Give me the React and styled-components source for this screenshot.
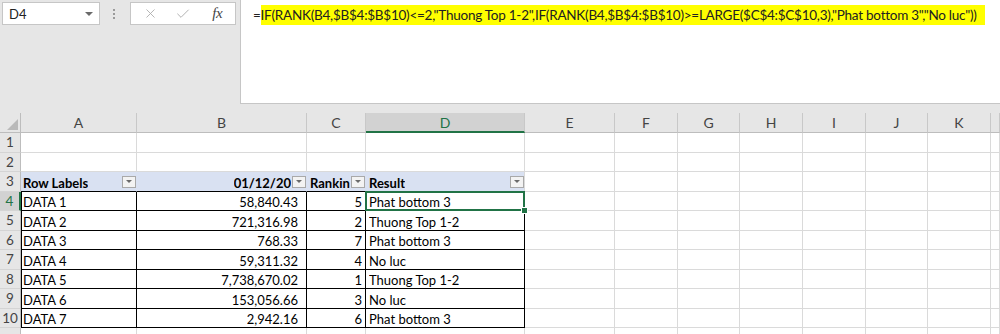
import React from 'react';
import styled, { createGlobalStyle } from 'styled-components';
import { X, Check } from 'lucide-react';

const GlobalStyle = createGlobalStyle`
  html, body {
    margin: 0;
    padding: 0;
    background: #fff;
  }
  body {
    font-family: Lato, "Liberation Sans", sans-serif;
  }
`;

const GREEN = '#217346';
const GRID = '#dadada';

const Page = styled.div`
  width: 1000px;
  height: 334px;
  overflow: hidden;
  display: flex;
  flex-direction: column;
  background: #e6e6e6;
`;

/* ---------- formula bar ---------- */

const Toolbar = styled.div`
  display: flex;
  height: 104px;
  flex-shrink: 0;
`;

const LeftTools = styled.div`
  width: 240px;
  flex-shrink: 0;
  display: flex;
  align-items: flex-start;
  padding: 2px 0 0 2px;
  box-sizing: border-box;
`;

const NameBox = styled.div`
  width: 98px;
  height: 23px;
  box-sizing: border-box;
  background: #fff;
  border: 1px solid #c6c6c6;
  display: flex;
  align-items: center;
  justify-content: space-between;
  padding: 0 6px 0 6px;
  font-size: 13px;
  color: #222;
`;

const Caret = styled.span`
  width: 0;
  height: 0;
  border-left: 4px solid transparent;
  border-right: 4px solid transparent;
  border-top: 4px solid #6a6a6a;
`;

const Grip = styled.div`
  width: 2px;
  height: 23px;
  margin: 0 15px 0 13px;
  display: flex;
  flex-direction: column;
  justify-content: center;
  gap: 2px;

  span {
    width: 2px;
    height: 2px;
    background: #9a9a9a;
  }
`;

const FxBox = styled.div`
  width: 106px;
  height: 23px;
  box-sizing: border-box;
  background: #fff;
  border: 1px solid #c6c6c6;
  display: flex;
  align-items: center;
  padding-left: 3px;
`;

const ToolSlot = styled.span`
  width: ${p => p.$w || 33}px;
  display: flex;
  justify-content: center;
  align-items: center;
  color: #ababab;
`;

const FxLabel = styled.span`
  font-family: "Liberation Serif", serif;
  font-style: italic;
  font-size: 15px;
  color: #444;
  letter-spacing: -0.5px;
`;

const FormulaBox = styled.div`
  flex: 1;
  background: #fff;
  border-left: 1px solid #c6c6c6;
  border-bottom: 1px solid #c6c6c6;
  padding: 4px 0 0 12px;
  font-size: 13.5px;
  letter-spacing: -0.25px;
  color: #222;
  white-space: nowrap;
  overflow: hidden;
  line-height: 22px;
`;

const Mark = styled.span`
  background: #ffff00;
  padding: 2px 8px 2px 0;
`;

/* ---------- sheet grid ---------- */

const Sheet = styled.div`
  margin-top: 9px;
  display: grid;
  grid-template-columns: 21px 116px 170px 59px 159px 90px 63px 62px 63px 63px 62px 63px 9px;
  grid-template-rows: 20px repeat(11, 19.5px);
`;

const Corner = styled.div`
  position: relative;
  background: #e6e6e6;
  border-right: 1px solid #bdbdbd;
  border-bottom: 1px solid #bdbdbd;
  box-sizing: border-box;

  &::after {
    content: '';
    position: absolute;
    right: 2px;
    bottom: 2px;
    width: 11px;
    height: 11px;
    background: #b9b9b9;
    clip-path: polygon(100% 0, 100% 100%, 0 100%);
  }
`;

const ColHead = styled.div`
  box-sizing: border-box;
  display: flex;
  align-items: center;
  justify-content: center;
  background: ${p => (p.$active ? '#d2d2d2' : '#e6e6e6')};
  color: ${p => (p.$active ? GREEN : '#444')};
  border-right: 1px solid #c8c8c8;
  border-bottom: ${p => (p.$active ? `2px solid ${GREEN}` : '1px solid #bdbdbd')};
  font-size: 14px;
`;

const RowHead = styled.div`
  box-sizing: border-box;
  display: flex;
  align-items: center;
  justify-content: center;
  background: ${p => (p.$active ? '#d2d2d2' : '#e6e6e6')};
  color: ${p => (p.$active ? GREEN : '#444')};
  border-right: ${p => (p.$active ? `2px solid ${GREEN}` : '1px solid #bdbdbd')};
  border-bottom: 1px solid #d4d4d4;
  font-size: 13.5px;
`;

const Cell = styled.div`
  position: relative;
  box-sizing: border-box;
  display: flex;
  align-items: flex-end;
  justify-content: ${p => (p.$align === 'right' ? 'flex-end' : 'flex-start')};
  padding: ${p => p.$pad || '0 2px'};
  background: ${p => p.$fill || '#fff'};
  border-right: 1px solid ${p => p.$lineR || GRID};
  border-bottom: 1px solid ${p => p.$lineB || GRID};
  box-shadow: ${p => (p.$leftEdge ? 'inset 1px 0 0 #000' : 'none')};
  font-size: 13px;
  font-weight: ${p => (p.$bold ? 700 : 400)};
  color: #000;
  line-height: 16px;
  white-space: nowrap;
  min-width: 0;
`;

const CellText = styled.span`
  overflow: hidden;
  min-width: 0;
`;

const FilterBtn = styled.span`
  flex-shrink: 0;
  width: 14px;
  height: 12px;
  box-sizing: border-box;
  margin: 0 0 3px auto;
  background: #f3f3f3;
  border: 1px solid #a9a9a9;
  display: flex;
  align-items: center;
  justify-content: center;

  &::after {
    content: '';
    border-left: 3px solid transparent;
    border-right: 3px solid transparent;
    border-top: 3px solid #6a6a6a;
  }
`;

const Selection = styled.span`
  position: absolute;
  top: -1px;
  left: -1px;
  right: -1px;
  bottom: -1px;
  border: 2px solid ${GREEN};
  pointer-events: none;
  z-index: 2;

  &::after {
    content: '';
    position: absolute;
    right: -5px;
    bottom: -5px;
    width: 5px;
    height: 5px;
    background: ${GREEN};
    border: 1px solid #fff;
  }
`;

const COLS = ['A', 'B', 'C', 'D', 'E', 'F', 'G', 'H', 'I', 'J', 'K', ''];

const HEADER = [
  { text: 'Row Labels' },
  { text: '01/12/20', align: 'right' },
  { text: 'Rankin' },
  { text: 'Result' },
];

const DATA = [
  ['DATA 1', '58,840.43', '5', 'Phat bottom 3'],
  ['DATA 2', '721,316.98', '2', 'Thuong Top 1-2'],
  ['DATA 3', '768.33', '7', 'Phat bottom 3'],
  ['DATA 4', '59,311.32', '4', 'No luc'],
  ['DATA 5', '7,738,670.02', '1', 'Thuong Top 1-2'],
  ['DATA 6', '153,056.66', '3', 'No luc'],
  ['DATA 7', '2,942.16', '6', 'Phat bottom 3'],
];

const FILL = '#d9e1f2';

function renderCell(row, ci) {
  const key = `${row}-${ci}`;

  if (row === 3 && ci < 4) {
    const h = HEADER[ci];
    return (
      <Cell
        key={key}
        $fill={FILL}
        $bold
        $lineR={ci < 3 ? FILL : GRID}
        $lineB="#000"
        $align={h.align}
        $pad={h.align === 'right' ? '0 0 0 2px' : ci === 0 ? '0 0 0 2px' : '0 0 0 3px'}
      >
        <CellText style={h.align === 'right' ? { marginLeft: 'auto' } : undefined}>{h.text}</CellText>
        <FilterBtn style={h.align === 'right' ? { marginLeft: 1 } : undefined} />
      </Cell>
    );
  }

  if (row >= 4 && row <= 10 && ci < 4) {
    const value = DATA[row - 4][ci];
    const right = ci === 1 || ci === 2;
    const pads = ['0 2px', '0 8px 0 2px', '0 3px 0 2px', '0 3px'];
    return (
      <Cell
        key={key}
        $lineR="#000"
        $lineB="#000"
        $leftEdge={ci === 0}
        $align={right ? 'right' : 'left'}
        $pad={pads[ci]}
      >
        <CellText>{value}</CellText>
        {row === 4 && ci === 3 && <Selection />}
      </Cell>
    );
  }

  return <Cell key={key} />;
}

export default function App() {
  const rows = Array.from({ length: 11 }, (_, i) => i + 1);

  return (
    <>
      <GlobalStyle />
      <Page>
        <Toolbar>
          <LeftTools>
            <NameBox>
              <span>D4</span>
              <Caret />
            </NameBox>
            <Grip>
              <span />
              <span />
              <span />
            </Grip>
            <FxBox>
              <ToolSlot>
                <X size={15} strokeWidth={1.4} />
              </ToolSlot>
              <ToolSlot>
                <Check size={16} strokeWidth={1.4} />
              </ToolSlot>
              <ToolSlot $w={36}>
                <FxLabel>fx</FxLabel>
              </ToolSlot>
            </FxBox>
          </LeftTools>
          <FormulaBox>
            =<Mark>IF(RANK(B4,$B$4:$B$10)&lt;=2,"Thuong Top 1-2",IF(RANK(B4,$B$4:$B$10)&gt;=LARGE($C$4:$C$10,3),"Phat bottom 3","No luc"))</Mark>
          </FormulaBox>
        </Toolbar>

        <Sheet>
          <Corner />
          {COLS.map((c, i) => (
            <ColHead key={i} $active={c === 'D'}>
              {c}
            </ColHead>
          ))}
          {rows.map(r => (
            <React.Fragment key={r}>
              <RowHead $active={r === 4}>{r <= 10 ? r : ''}</RowHead>
              {COLS.map((_, ci) => renderCell(r, ci))}
            </React.Fragment>
          ))}
        </Sheet>
      </Page>
    </>
  );
}
